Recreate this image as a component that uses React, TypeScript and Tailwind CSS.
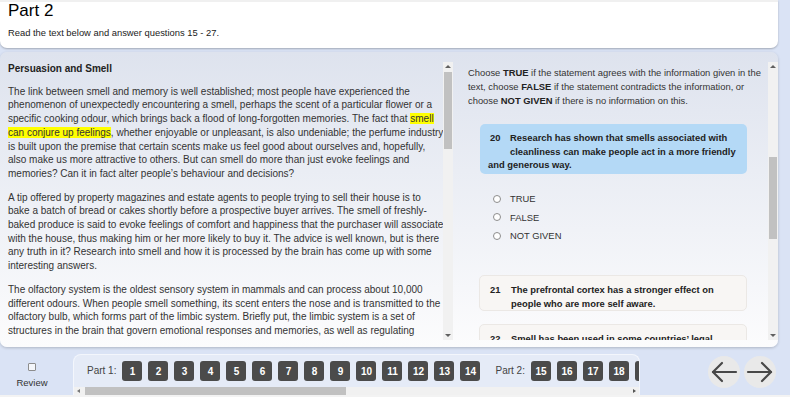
import React from "react";

function VScroll({ thumbTop, thumbHeight }: { thumbTop: number; thumbHeight: number }) {
  return (
    <div className="w-[10px] h-full bg-[#f1f1f1] relative shrink-0">
      <div className="absolute left-[2px] top-[3px] w-0 h-0 border-l-[3px] border-r-[3px] border-b-[3px] border-l-transparent border-r-transparent border-b-[#606060]" />
      <div
        className="absolute left-[1px] w-[8px] bg-[#c1c1c1]"
        style={{ top: thumbTop, height: thumbHeight }}
      />
      <div className="absolute left-[2px] bottom-[3px] w-0 h-0 border-l-[3px] border-r-[3px] border-t-[3px] border-l-transparent border-r-transparent border-t-[#606060]" />
    </div>
  );
}

function Arrow({ dir }: { dir: "left" | "right" }) {
  return (
    <div className="w-[32px] h-[32px] rounded-full bg-[#e9e9e9] flex items-center justify-center">
      <svg width="28" height="22" viewBox="0 0 28 22" fill="none" stroke="#484848" strokeWidth="2.2" strokeLinecap="round" strokeLinejoin="round">
        {dir === "left" ? (
          <>
            <line x1="3" y1="11" x2="26" y2="11" />
            <polyline points="12,2 3,11 12,20" />
          </>
        ) : (
          <>
            <line x1="2" y1="11" x2="25" y2="11" />
            <polyline points="16,2 25,11 16,20" />
          </>
        )}
      </svg>
    </div>
  );
}

function NumBtn({ n }: { n: number }) {
  return (
    <div className="w-[20px] h-[20px] shrink-0 rounded-[3px] bg-[#4b4b4b] text-white text-[10px] font-bold flex items-center justify-center">
      {n}
    </div>
  );
}

function Lines({ lines }: { lines: React.ReactNode[] }) {
  return (
    <p className="mb-[10px] whitespace-nowrap">
      {lines.map((l, i) => (
        <React.Fragment key={i}>
          {l}
          {i < lines.length - 1 && <br />}
        </React.Fragment>
      ))}
    </p>
  );
}

export default function App() {
  const part1 = Array.from({ length: 14 }, (_, i) => i + 1);
  const part2 = Array.from({ length: 13 }, (_, i) => i + 15);
  const hl = "bg-[#ffff00]";
  return (
    <div
      className="w-[790px] h-[397px] overflow-hidden bg-[#dae3f5] flex flex-col text-[#333]"
      style={{ fontFamily: '"Liberation Sans", Arial, sans-serif' }}
    >
      {/* Header */}
      <header className="mr-[12px] h-[48px] shrink-0 bg-white border-t-2 border-[#f0f0f0] rounded-b-[7px] shadow-[0_1px_2px_rgba(0,0,0,0.25)] pl-[8px]">
        <h1 className="text-[17px] leading-[20px] mt-[-1px] text-black">Part 2</h1>
        <p className="text-[9.4px] leading-[13px] mt-[5px] text-[#222]">
          Read the text below and answer questions 15 - 27.
        </p>
      </header>

      {/* Main panel */}
      <div className="mt-[4px] mr-[12px] h-[295px] shrink-0 rounded-[7px] bg-gradient-to-b from-[#dee3ee] to-[#fcfcfd] shadow-[0_1px_3px_rgba(0,0,0,0.2)] pt-[10px] pb-[7px] flex">
        {/* Passage */}
        <div className="w-[453px] h-full flex shrink-0">
          <div className="flex-1 h-full overflow-hidden pl-[8px] pr-[3px] text-[10px] leading-[13.7px]">
            <h2 className="font-bold text-[#222] mb-[9px]">Persuasion and Smell</h2>
            <Lines
              lines={[
                "The link between smell and memory is well established; most people have experienced the",
                "phenomenon of unexpectedly encountering a smell, perhaps the scent of a particular flower or a",
                <>
                  specific cooking odour, which brings back a flood of long-forgotten memories. The fact that{" "}
                  <span className={hl}>smell</span>
                </>,
                <>
                  <span className={hl}>can conjure up feelings</span>, whether enjoyable or unpleasant, is also undeniable; the perfume industry
                </>,
                "is built upon the premise that certain scents make us feel good about ourselves and, hopefully,",
                "also make us more attractive to others. But can smell do more than just evoke feelings and",
                "memories? Can it in fact alter people’s behaviour and decisions?",
              ]}
            />
            <Lines
              lines={[
                "A tip offered by property magazines and estate agents to people trying to sell their house is to",
                "bake a batch of bread or cakes shortly before a prospective buyer arrives. The smell of freshly-",
                "baked produce is said to evoke feelings of comfort and happiness that the purchaser will associate",
                "with the house, thus making him or her more likely to buy it. The advice is well known, but is there",
                "any truth in it? Research into smell and how it is processed by the brain has come up with some",
                "interesting answers.",
              ]}
            />
            <Lines
              lines={[
                "The olfactory system is the oldest sensory system in mammals and can process about 10,000",
                "different odours. When people smell something, its scent enters the nose and is transmitted to the",
                "olfactory bulb, which forms part of the limbic system. Briefly put, the limbic system is a set of",
                "structures in the brain that govern emotional responses and memories, as well as regulating",
                "behaviour and long-term memory.",
              ]}
            />
          </div>
          <VScroll thumbTop={10} thumbHeight={77} />
        </div>

        {/* Questions */}
        <div className="flex-1 h-full flex">
          <div className="flex-1 h-full overflow-hidden pl-[15px] pr-[6px] pt-[4px] text-[9.4px]">
            <p className="leading-[14px]">
              Choose <b className="text-[#222]">TRUE</b> if the statement agrees with the information given in the
              text, choose <b className="text-[#222]">FALSE</b> if the statement contradicts the information, or
              <br />
              choose <b className="text-[#222]">NOT GIVEN</b> if there is no information on this.
            </p>

            <div className="mt-[16px] ml-[12px] w-[267px] rounded-[5px] bg-[#b4d9f6] pt-[7px] pb-[2px] pl-[8px] pr-[8px] font-bold text-[#222] leading-[13.5px]">
              <span className="float-left w-[22px] h-[27px] pl-[2px]">20</span>
              Research has shown that smells associated with cleanliness can make people act in a more friendly
              and generous way.
            </div>

            <div className="mt-[16px] ml-[25px] flex flex-col">
              {["TRUE", "FALSE", "NOT GIVEN"].map((o) => (
                <div key={o} className="h-[18.5px] flex items-center">
                  <span className="w-[8px] h-[8px] rounded-full border border-[#8d8d8d] bg-white shrink-0" />
                  <span className="ml-[9px] leading-[13px] text-[#333]">{o}</span>
                </div>
              ))}
            </div>

            <div className="mt-[30px] ml-[11px] w-[268px] rounded-[5px] bg-[#f8f6f4] border border-[#ebe8e5] pt-[7px] pb-0 pl-[9px] pr-[8px] font-bold text-[#222] leading-[13.5px]">
              <span className="float-left w-[22px] h-[27px] pl-[1px]">21</span>
              <span className="block">The prefrontal cortex has a stronger effect on people who are more self aware.</span>
            </div>

            <div className="mt-[13px] ml-[11px] w-[268px] rounded-[5px] bg-[#f8f6f4] border border-[#ebe8e5] pt-[7px] pb-0 pl-[9px] pr-[8px] font-bold text-[#222] leading-[13.5px]">
              <span className="float-left w-[22px] h-[27px] pl-[1px]">22</span>
              <span className="block">Smell has been used in some countries’ legal systems to influence jury decisions.</span>
            </div>
          </div>
          <VScroll thumbTop={95} thumbHeight={82} />
        </div>
      </div>

      {/* Bottom navigation */}
      <div className="h-[48px] shrink-0 flex">
        <div className="w-[64px] flex flex-col items-center pt-[16px]">
          <span className="w-[8px] h-[8px] border border-[#8d8d8d] rounded-[1px] bg-[#f4f6fa]" />
          <span className="text-[9.5px] leading-[13px] mt-[5px] text-[#333]">Review</span>
        </div>
        <div className="ml-[9px] mt-[7px] w-[567px] h-[41px] rounded-t-[8px] bg-[#e5ebf7] border-t border-l border-r border-[#f3f6fc] flex flex-col overflow-hidden">
          <div className="h-[33px] flex items-start pt-[6px] pl-[13px] overflow-hidden whitespace-nowrap">
            <span className="text-[10px] leading-[20px] text-[#444] mr-[6px] shrink-0">Part 1:</span>
            <div className="flex gap-[6px] shrink-0">
              {part1.map((n) => (
                <NumBtn key={n} n={n} />
              ))}
            </div>
            <span className="text-[10px] leading-[20px] text-[#444] ml-[15px] mr-[6px] shrink-0">Part 2:</span>
            <div className="flex gap-[6px] shrink-0">
              {part2.map((n) => (
                <NumBtn key={n} n={n} />
              ))}
            </div>
          </div>
          <div className="h-[8px] bg-[#f1f1f1] relative">
            <div className="absolute left-[3px] top-[2px] w-0 h-0 border-t-[2px] border-b-[2px] border-r-[3px] border-t-transparent border-b-transparent border-r-[#777]" />
            <div className="absolute left-[11px] top-0 w-[261px] h-[8px] bg-[#c1c1c1]" />
            <div className="absolute right-[3px] top-[2px] w-0 h-0 border-t-[2px] border-b-[2px] border-l-[3px] border-t-transparent border-b-transparent border-l-[#555]" />
          </div>
        </div>
        <div className="ml-[68px] mt-[9px] flex gap-[4px]">
          <Arrow dir="left" />
          <Arrow dir="right" />
        </div>
      </div>
      <div className="h-[2px] bg-[#f3f3f3] shrink-0" />
    </div>
  );
}
